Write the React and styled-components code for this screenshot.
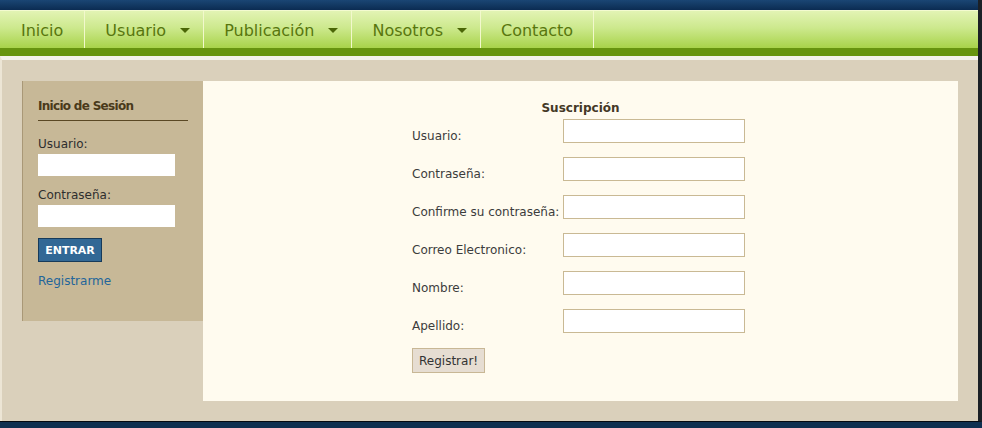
import React from "react";
import styled, { createGlobalStyle } from "styled-components";

const Global = createGlobalStyle`
  html, body { margin: 0; padding: 0; }
  body {
    background: #0f3050;
    font-family: "DejaVu Sans", Verdana, sans-serif;
    font-size: 12px;
    color: #3a3a3a;
  }
`;

const Wrapper = styled.div`
  width: 978px;
  border-right: 4px solid #1b2026;
  border-bottom: 1px solid #050a10;
`;

const TopBar = styled.div`
  height: 10px;
  background: linear-gradient(#1a4674, #0b2c52);
`;

const Nav = styled.nav`
  display: flex;
  height: 38px;
  background: linear-gradient(#e2f3b4 0%, #cde98e 45%, #a8d34a 100%);
  border-top: 1px solid #f3fad0;
  box-sizing: border-box;
`;

const NavBottom = styled.div`
  height: 8px;
  background: #67940f;
`;

const NavItem = styled.a`
  display: flex;
  align-items: center;
  padding: 1px ${(p) => (p.$menu ? "13px" : "20px")} 0 20px;
  border-right: 1px solid #f2f8cc;
  font-size: 16px;
  color: #58760e;
  text-decoration: none;
  white-space: nowrap;
  &:first-child {
    padding-left: 21px;
    padding-right: 21px;
  }
`;

const Arrow = styled.span`
  width: 0;
  height: 0;
  margin-left: 14px;
  border-left: 5px solid transparent;
  border-right: 5px solid transparent;
  border-top: 5px solid #4a6606;
  margin-top: 1px;
`;

const Body = styled.div`
  border-top: 4px solid #f4f2ec;
  border-left: 2px solid #ece5d5;
  background: #dad0bb;
  padding: 21px 20px 20px 20px;
  display: flex;
  align-items: flex-start;
`;

const Sidebar = styled.aside`
  width: 181px;
  flex-shrink: 0;
  border-left: 1px solid #a99877;
  background: #c7b897;
  padding: 18px 15px 32px 15px;
  box-sizing: border-box;
`;

const SideTitle = styled.h3`
  margin: 0 0 16px 0;
  padding-bottom: 6px;
  border-bottom: 1px solid #5a4824;
  font-size: 12px;
  line-height: 15px;
  font-weight: bold;
  letter-spacing: -0.7px;
  color: #4a3a1a;
`;

const SideLabel = styled.label`
  display: block;
  font-size: 12px;
  line-height: 15px;
  color: #2e2e2e;
  margin-top: ${(p) => p.$top || 0}px;
`;

const SideInput = styled.input`
  display: block;
  width: 137px;
  height: 22px;
  box-sizing: border-box;
  margin-top: 2px;
  border: none;
  background: #fff;
  padding: 0 3px;
`;

const EnterButton = styled.button`
  display: block;
  margin-top: 11px;
  width: 64px;
  height: 24px;
  box-sizing: border-box;
  background: #326895;
  border: 1px solid #163a5a;
  color: #fff;
  font-family: "DejaVu Sans", Verdana, sans-serif;
  font-size: 11px;
  font-weight: bold;
  padding: 0;
`;

const SideLink = styled.a`
  display: block;
  margin-top: 12px;
  font-size: 12px;
  line-height: 15px;
  color: #23659a;
  text-decoration: none;
`;

const Main = styled.main`
  flex: 1;
  height: 320px;
  background: #fffbef;
  padding-top: 20px;
  box-sizing: border-box;
`;

const FormTitle = styled.h2`
  margin: 0;
  text-align: center;
  font-size: 12px;
  line-height: 15px;
  font-weight: bold;
  color: #443826;
`;

const Form = styled.form`
  display: grid;
  grid-template-columns: 151px 182px;
  row-gap: 14px;
  align-items: end;
  width: 333px;
  margin: 3px 0 0 209px;
`;

const FormLabel = styled.label`
  font-size: 12px;
  line-height: 15px;
  color: #3c3c3c;
  white-space: nowrap;
  margin-bottom: -1px;
`;

const FormInput = styled.input`
  width: 182px;
  height: 24px;
  box-sizing: border-box;
  border: 1px solid #c9b994;
  background: #fff;
`;

const Submit = styled.button`
  grid-column: 1;
  justify-self: start;
  margin-top: 1px;
  height: 25px;
  padding: 0 6px;
  background: #e6ddd2;
  border: 1px solid #c8b795;
  font-family: "DejaVu Sans", Verdana, sans-serif;
  font-size: 12px;
  color: #333;
`;

const menu = [
  { label: "Inicio" },
  { label: "Usuario", menu: true },
  { label: "Publicación", menu: true },
  { label: "Nosotros", menu: true },
  { label: "Contacto" },
];

const fields = [
  "Usuario:",
  "Contraseña:",
  "Confirme su contraseña:",
  "Correo Electronico:",
  "Nombre:",
  "Apellido:",
];

export default function App() {
  return (
    <>
      <Global />
      <Wrapper>
        <TopBar />
        <Nav>
          {menu.map((m) => (
            <NavItem key={m.label} $menu={m.menu} href="#">
              {m.label}
              {m.menu && <Arrow />}
            </NavItem>
          ))}
        </Nav>
        <NavBottom />
        <Body>
          <Sidebar>
            <SideTitle>Inicio de Sesión</SideTitle>
            <SideLabel>Usuario:</SideLabel>
            <SideInput type="text" />
            <SideLabel $top={12}>Contraseña:</SideLabel>
            <SideInput type="password" />
            <EnterButton>ENTRAR</EnterButton>
            <SideLink href="#">Registrarme</SideLink>
          </Sidebar>
          <Main>
            <FormTitle>Suscripción</FormTitle>
            <Form onSubmit={(e) => e.preventDefault()}>
              {fields.map((f) => (
                <React.Fragment key={f}>
                  <FormLabel>{f}</FormLabel>
                  <FormInput type="text" />
                </React.Fragment>
              ))}
              <Submit type="submit">Registrar!</Submit>
            </Form>
          </Main>
        </Body>
      </Wrapper>
    </>
  );
}
